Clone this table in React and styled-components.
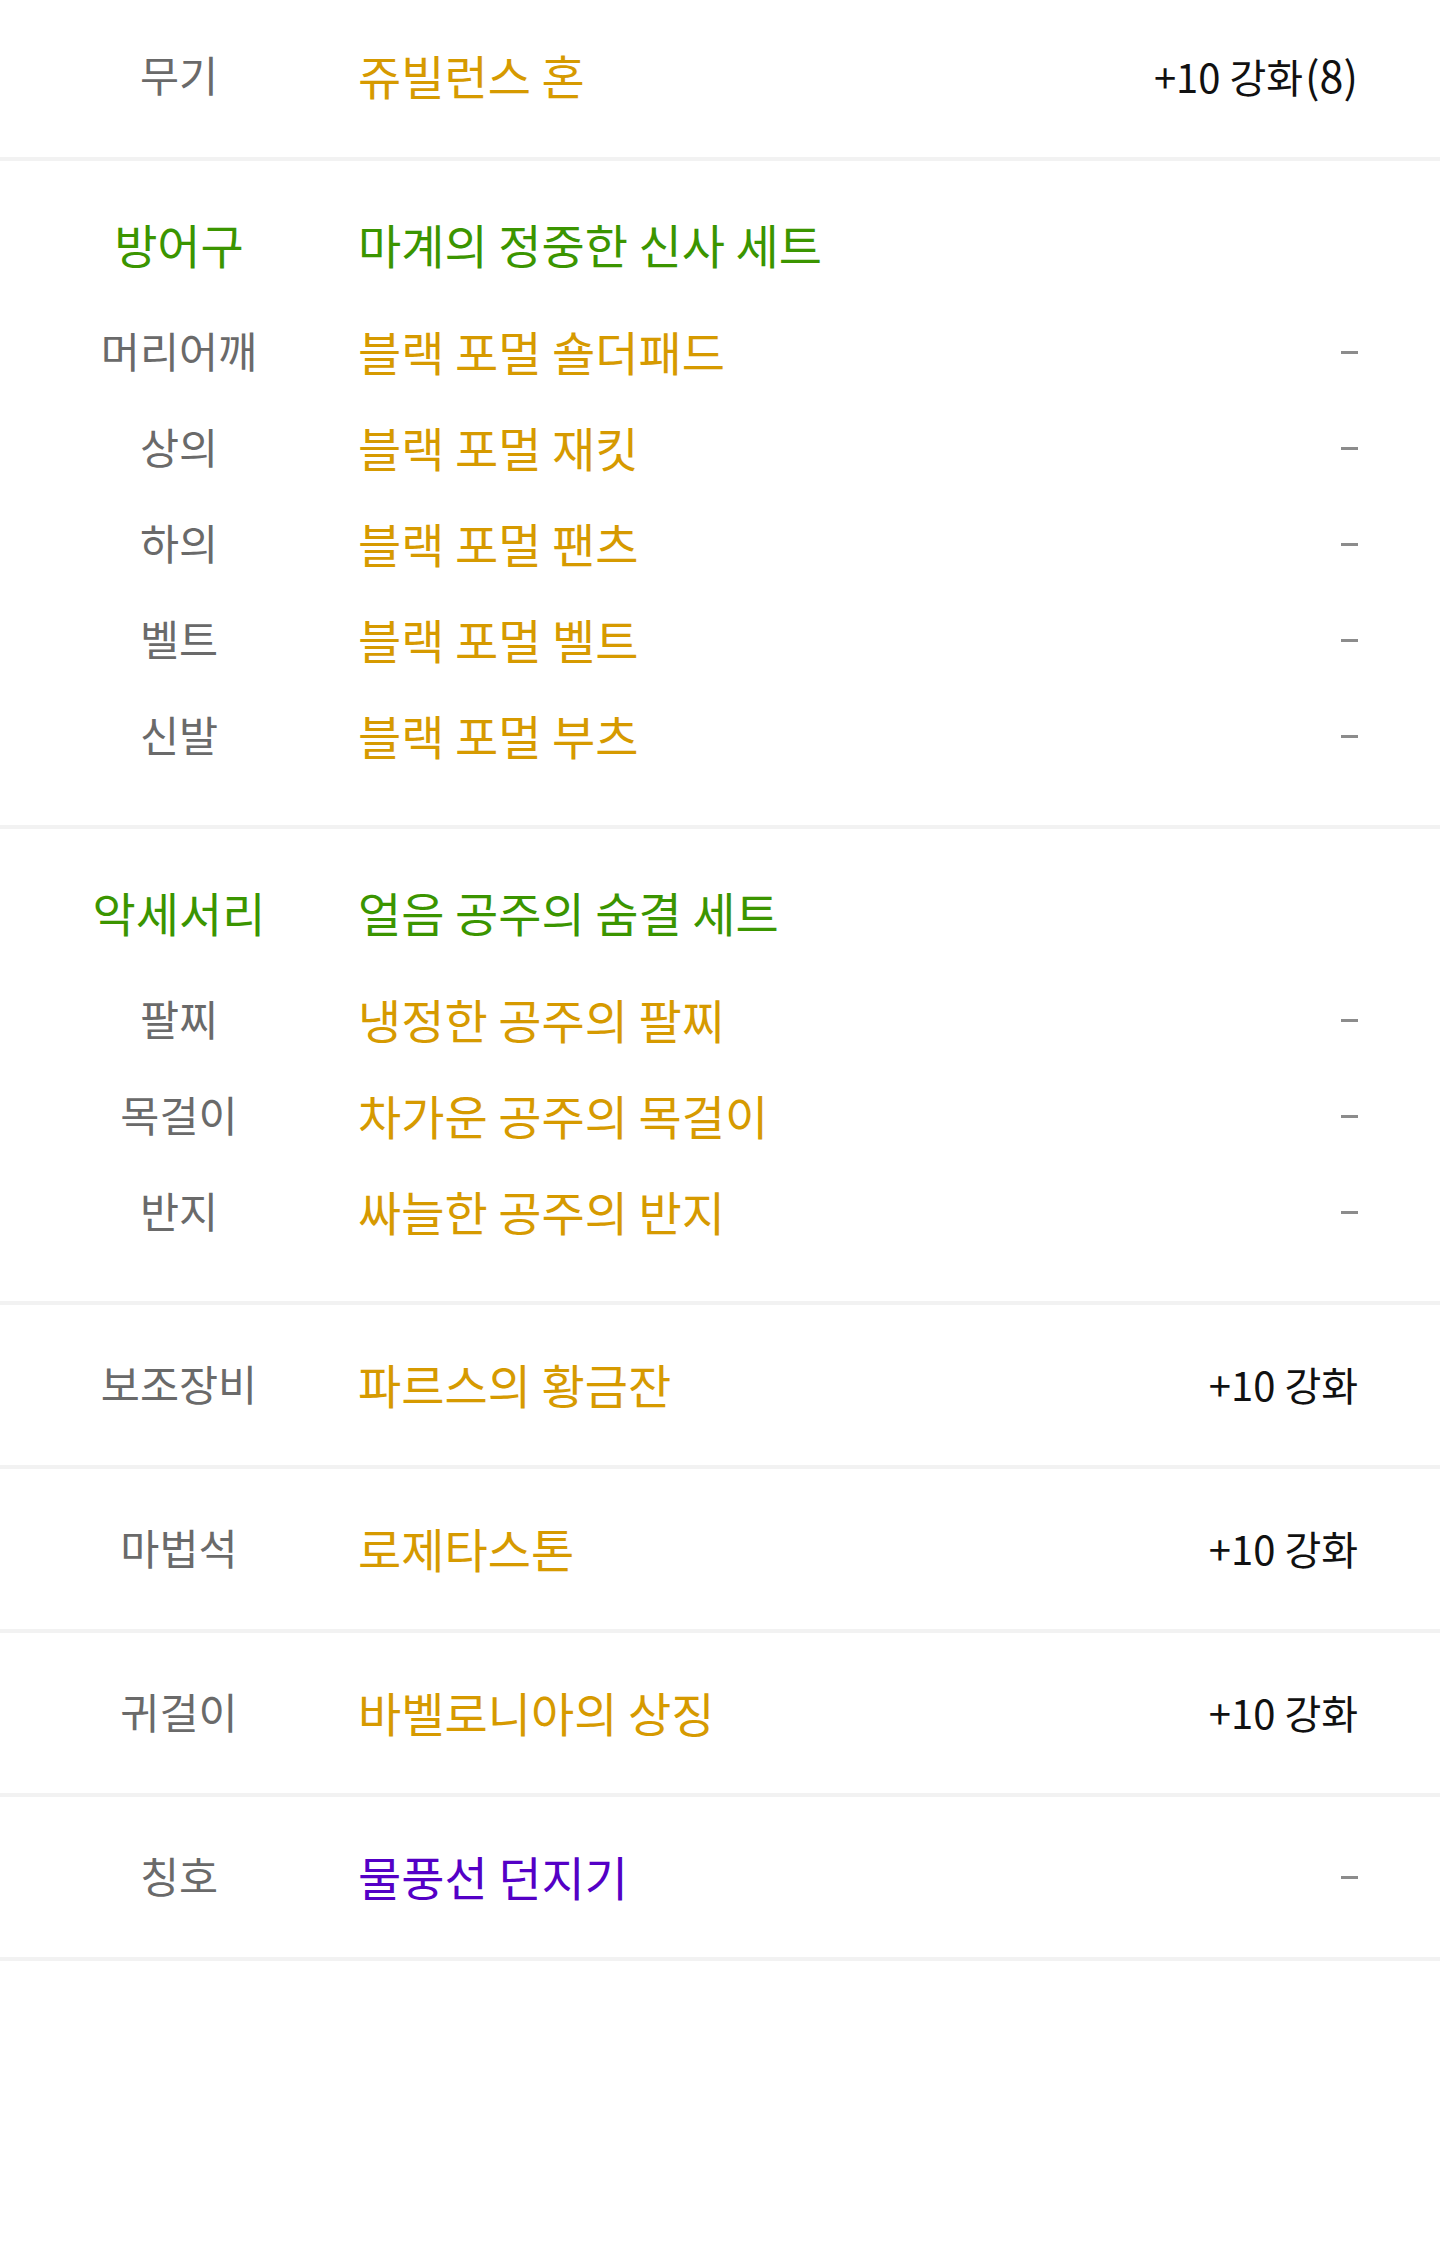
import React from "react";
import styled, { createGlobalStyle } from "styled-components";

const Global = createGlobalStyle`
  html, body {
    margin: 0;
    padding: 0;
    background: #ffffff;
  }
  body {
    font-family: "Noto Sans CJK KR", "Noto Sans", sans-serif;
    -webkit-font-smoothing: antialiased;
  }
`;

const TONES = {
  label: "#6a6a6a",
  unique: "#d69a00",
  set: "#3b9500",
  title: "#5400c6",
};

const Page = styled.main`
  width: 100%;
  min-height: 2246px;
  background: #ffffff;
  display: flex;
  flex-direction: column;
`;

const Row = styled.div`
  display: grid;
  grid-template-columns: 358px 1fr auto;
  align-items: center;
  padding-right: 82px;
  padding-bottom: ${(p) => p.$lift || 0}px;
  height: ${(p) => p.$h || 96}px;
  box-sizing: border-box;
`;

const Block = styled.section`
  border-bottom: 4px solid #f2f2f2;
`;

const Group = styled.section`
  display: flex;
  flex-direction: column;
  padding: 36px 0 41px;
  border-bottom: 4px solid #f2f2f2;
`;

const GroupHead = styled(Row)`
  margin-bottom: 11px;
`;

const Label = styled.span`
  text-align: center;
  font-size: ${(p) => (p.$head ? 47 : 42.5)}px;
  line-height: 1;
  color: ${(p) => TONES[p.$tone || "label"]};
  white-space: nowrap;
  margin-top: -3px;
`;

const Name = styled.span`
  font-size: 47px;
  line-height: 1;
  color: ${(p) => TONES[p.$tone || "unique"]};
  white-space: nowrap;
  margin-top: -3px;
`;

const Value = styled.span`
  font-size: 40px;
  line-height: 1;
  color: #111111;
  text-align: right;
  white-space: nowrap;
  margin-top: -3px;
`;

const Count = styled.span`
  font-size: 43px;
  margin-left: 2px;
`;

const Dash = styled.span`
  justify-self: end;
  width: 17px;
  height: 3px;
  background: #8c8c8c;
`;

const single = [
  { label: "보조장비", name: "파르스의 황금잔", value: "+10 강화" },
  { label: "마법석", name: "로제타스톤", value: "+10 강화" },
  { label: "귀걸이", name: "바벨로니아의 상징", value: "+10 강화" },
  { label: "칭호", name: "물풍선 던지기", tone: "title" },
];

const groups = [
  {
    label: "방어구",
    set: "마계의 정중한 신사 세트",
    items: [
      ["머리어깨", "블랙 포멀 숄더패드"],
      ["상의", "블랙 포멀 재킷"],
      ["하의", "블랙 포멀 팬츠"],
      ["벨트", "블랙 포멀 벨트"],
      ["신발", "블랙 포멀 부츠"],
    ],
  },
  {
    label: "악세서리",
    set: "얼음 공주의 숨결 세트",
    items: [
      ["팔찌", "냉정한 공주의 팔찌"],
      ["목걸이", "차가운 공주의 목걸이"],
      ["반지", "싸늘한 공주의 반지"],
    ],
  },
];

const Trail = ({ value }) =>
  value ? <Value>{value}</Value> : <Dash aria-label="-" />;

export default function App() {
  return (
    <>
      <Global />
      <Page>
        <Block>
          <Row $h={157} $lift={6}>
            <Label>무기</Label>
            <Name>쥬빌런스 혼</Name>
            <Value>
              +10 강화<Count>(8)</Count>
            </Value>
          </Row>
        </Block>
        {groups.map((g) => (
          <Group key={g.label}>
            <GroupHead>
              <Label $head $tone="set">
                {g.label}
              </Label>
              <Name $tone="set">{g.set}</Name>
            </GroupHead>
            {g.items.map(([l, n]) => (
              <Row key={l}>
                <Label>{l}</Label>
                <Name>{n}</Name>
                <Trail />
              </Row>
            ))}
          </Group>
        ))}
        {single.map((s) => (
          <Block key={s.label}>
            <Row $h={160}>
              <Label>{s.label}</Label>
              <Name $tone={s.tone}>{s.name}</Name>
              <Trail value={s.value} />
            </Row>
          </Block>
        ))}
      </Page>
    </>
  );
}
